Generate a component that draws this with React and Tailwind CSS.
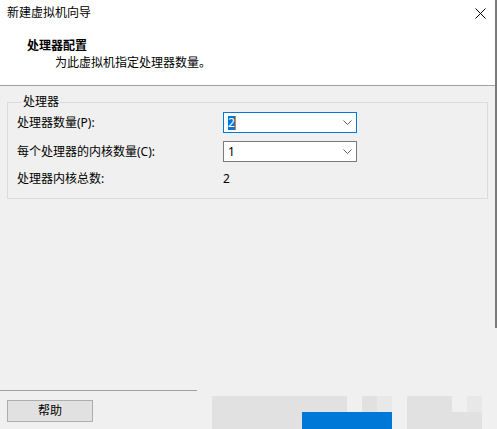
import React from 'react';

const Chevron = () => (
  <svg width="9" height="5" viewBox="0 0 9 5" className="shrink-0">
    <polyline points="0.5,0.5 4.5,4.5 8.5,0.5" fill="none" stroke="#606060" strokeWidth="1" />
  </svg>
);

const Cell = ({ c }) => {
  const cls = {
    g: 'bg-[#e1e1e1]',
    l: 'bg-[#e8e8e8]',
    b: 'bg-[#0078d7]',
    n: '',
  }[c];
  return <div className={cls} />;
};

const row1 = 'gggggggggnglnggg' + 'nl';
const row2 = 'ggggggbbbbbbn' + 'ggggg';

export default function App() {
  return (
    <div className="flex w-[497px] h-[429px] bg-[#f0f0f0] overflow-hidden text-[12px] leading-[16px] text-black font-['Noto_Sans','Noto_Sans_CJK_SC',sans-serif]">
      <div className="flex flex-col w-[495px] h-full">
        {/* header */}
        <div className="h-[85px] bg-white flex flex-col">
          <div className="flex justify-between items-start pt-[5px] pl-[7px] pr-[9px]">
            <span>新建虚拟机向导</span>
            <svg width="11" height="11" viewBox="0 0 11 11" className="mt-[3px]">
              <path d="M0.5 0.5 L10.5 10.5 M10.5 0.5 L0.5 10.5" stroke="#000" strokeWidth="1" />
            </svg>
          </div>
          <div className="mt-[17px] pl-[27px] font-bold">处理器配置</div>
          <div className="mt-px pl-[55px]">为此虚拟机指定处理器数量。</div>
        </div>
        <div className="h-px bg-[#a0a0a0]" />

        {/* processor group */}
        <fieldset className="mt-[8px] ml-[7px] w-[481px] border border-[#dcdcdc] pl-[9px] pb-[11px]">
          <legend className="ml-[5px] px-px">处理器</legend>
          <div className="mt-[2px] grid grid-cols-[206px_134px] gap-y-[8px] items-center">
            <span>处理器数量(P):</span>
            <div className="h-[21px] border border-[#0078d7] bg-white flex items-center justify-between pl-[4px] pr-[4px]">
              <div className="flex items-center">
                <span className="bg-[#0078d7] text-white w-[7px] h-[14px] leading-[14px] flex justify-center">2</span>
                <span className="w-px h-[14px] bg-[#f08020]" />
              </div>
              <Chevron />
            </div>
            <span>每个处理器的内核数量(C):</span>
            <div className="h-[21px] border border-[#7a7a7a] bg-white flex items-center justify-between pl-[4px] pr-[4px]">
              <span>1</span>
              <Chevron />
            </div>
            <span className="mt-[1px]">处理器内核总数:</span>
            <span className="mt-[1px]">2</span>
          </div>
        </fieldset>

        <div className="flex-1" />

        {/* bottom bar */}
        <div className="h-[39px] flex flex-col">
          <div className="h-px w-[197px] bg-[#a0a0a0]" />
          <div className="flex items-start">
            <button className="mt-[9px] ml-[7px] w-[86px] h-[22px] bg-[#e1e1e1] border border-[#adadad] flex items-center justify-center">
              帮助
            </button>
            <div className="ml-[119px] mt-[5px] grid grid-cols-[repeat(18,15px)] grid-rows-[16px_17px]">
              {row1.split('').map((c, i) => (
                <Cell key={'a' + i} c={c} />
              ))}
              {row2.split('').map((c, i) => (
                <Cell key={'b' + i} c={c} />
              ))}
            </div>
          </div>
        </div>
      </div>
      <div className="w-[2px] flex flex-col">
        <div className="h-[328px] bg-[#7a7a7a]" />
      </div>
    </div>
  );
}
